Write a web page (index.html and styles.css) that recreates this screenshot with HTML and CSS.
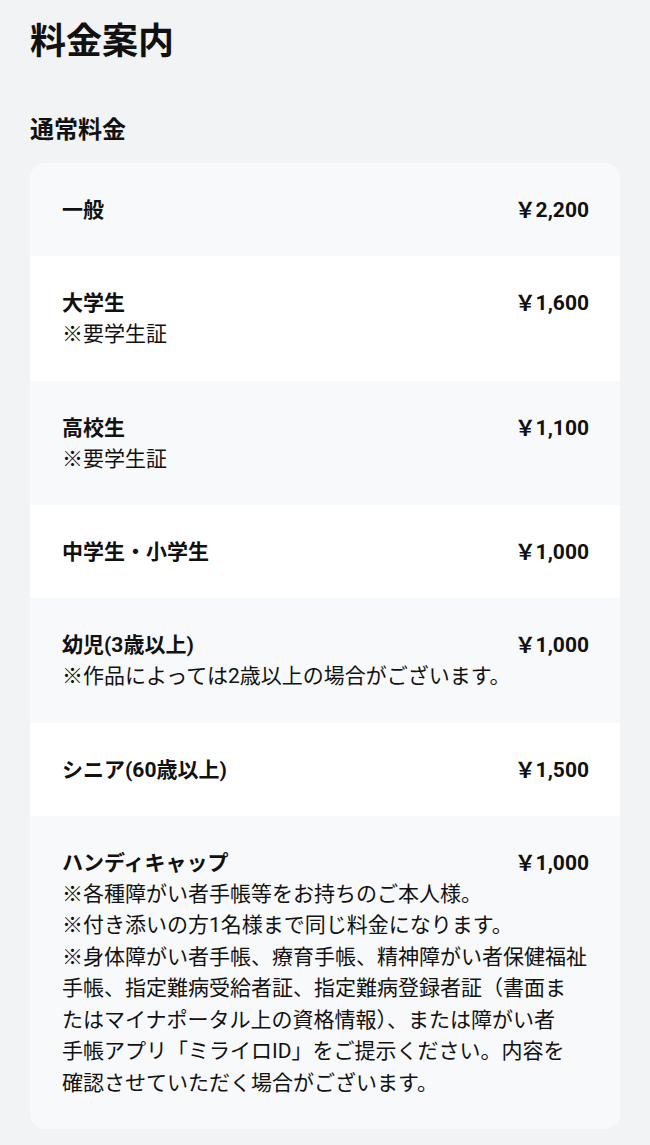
FILE: index.html
```html
<!DOCTYPE html>
<html lang="ja">
<head>
  <meta charset="UTF-8">
  <title>料金案内</title>
  <link rel="stylesheet" href="styles.css">
</head>
<body>

<h1 class="page-title">料金案内</h1>

<h2 class="section-title">通常料金</h2>

<div class="price-list">
  <div class="price-row">
    <div class="price-head">
      <span class="price-name">一般</span>
      <span class="price-value">￥2,200</span>
    </div>
  </div>
  <div class="price-row">
    <div class="price-head">
      <span class="price-name">大学生</span>
      <span class="price-value">￥1,600</span>
    </div>
    <div class="price-note">※要学生証</div>
  </div>
  <div class="price-row">
    <div class="price-head">
      <span class="price-name">高校生</span>
      <span class="price-value">￥1,100</span>
    </div>
    <div class="price-note">※要学生証</div>
  </div>
  <div class="price-row">
    <div class="price-head">
      <span class="price-name">中学生・小学生</span>
      <span class="price-value">￥1,000</span>
    </div>
  </div>
  <div class="price-row">
    <div class="price-head">
      <span class="price-name">幼児(3歳以上)</span>
      <span class="price-value">￥1,000</span>
    </div>
    <div class="price-note">※作品によっては2歳以上の場合がございます。</div>
  </div>
  <div class="price-row">
    <div class="price-head">
      <span class="price-name">シニア(60歳以上)</span>
      <span class="price-value">￥1,500</span>
    </div>
  </div>
  <div class="price-row">
    <div class="price-head">
      <span class="price-name">ハンディキャップ</span>
      <span class="price-value">￥1,000</span>
    </div>
    <div class="price-note">※各種障がい者手帳等をお持ちのご本人様。</div>
    <div class="price-note">※付き添いの方1名様まで同じ料金になります。</div>
    <div class="price-note">※身体障がい者手帳、療育手帳、精神障がい者保健福祉<br>手帳、指定難病受給者証、指定難病登録者証（書面ま<br>たはマイナポータル上の資格情報）、または障がい者<br>手帳アプリ「ミライロID」をご提示ください。内容を<br>確認させていただく場合がございます。</div>
  </div>
</div>

</body>
</html>
```

FILE: styles.css
```css
body {
  margin: 0;
  padding: 15px 30px 17px;
  background-color: #f2f3f5;
  color: #111;
  font-family: Roboto, "Noto Sans CJK JP", sans-serif;
}
.page-title {
  margin: 0;
  font-size: 36px;
  line-height: 54px;
  font-weight: bold;
}
.section-title {
  margin: 43px 0 15px;
  font-size: 24px;
  line-height: 36px;
  font-weight: bold;
}
.price-list {
  background-color: #fff;
  border-radius: 16px;
  overflow: hidden;
}
.price-row {
  padding: 32px 31px 30px 32px;
  font-size: 21px;
  line-height: 31.5px;
}
.price-row:nth-child(odd) {
  background-color: #f8f9fa;
}
.price-head {
  display: flex;
  justify-content: space-between;
  line-height: 31px;
}
.price-name {
  font-weight: bold;
}
.price-value {
  font-weight: bold;
  white-space: nowrap;
}
.price-note {
  white-space: nowrap;
}
```
